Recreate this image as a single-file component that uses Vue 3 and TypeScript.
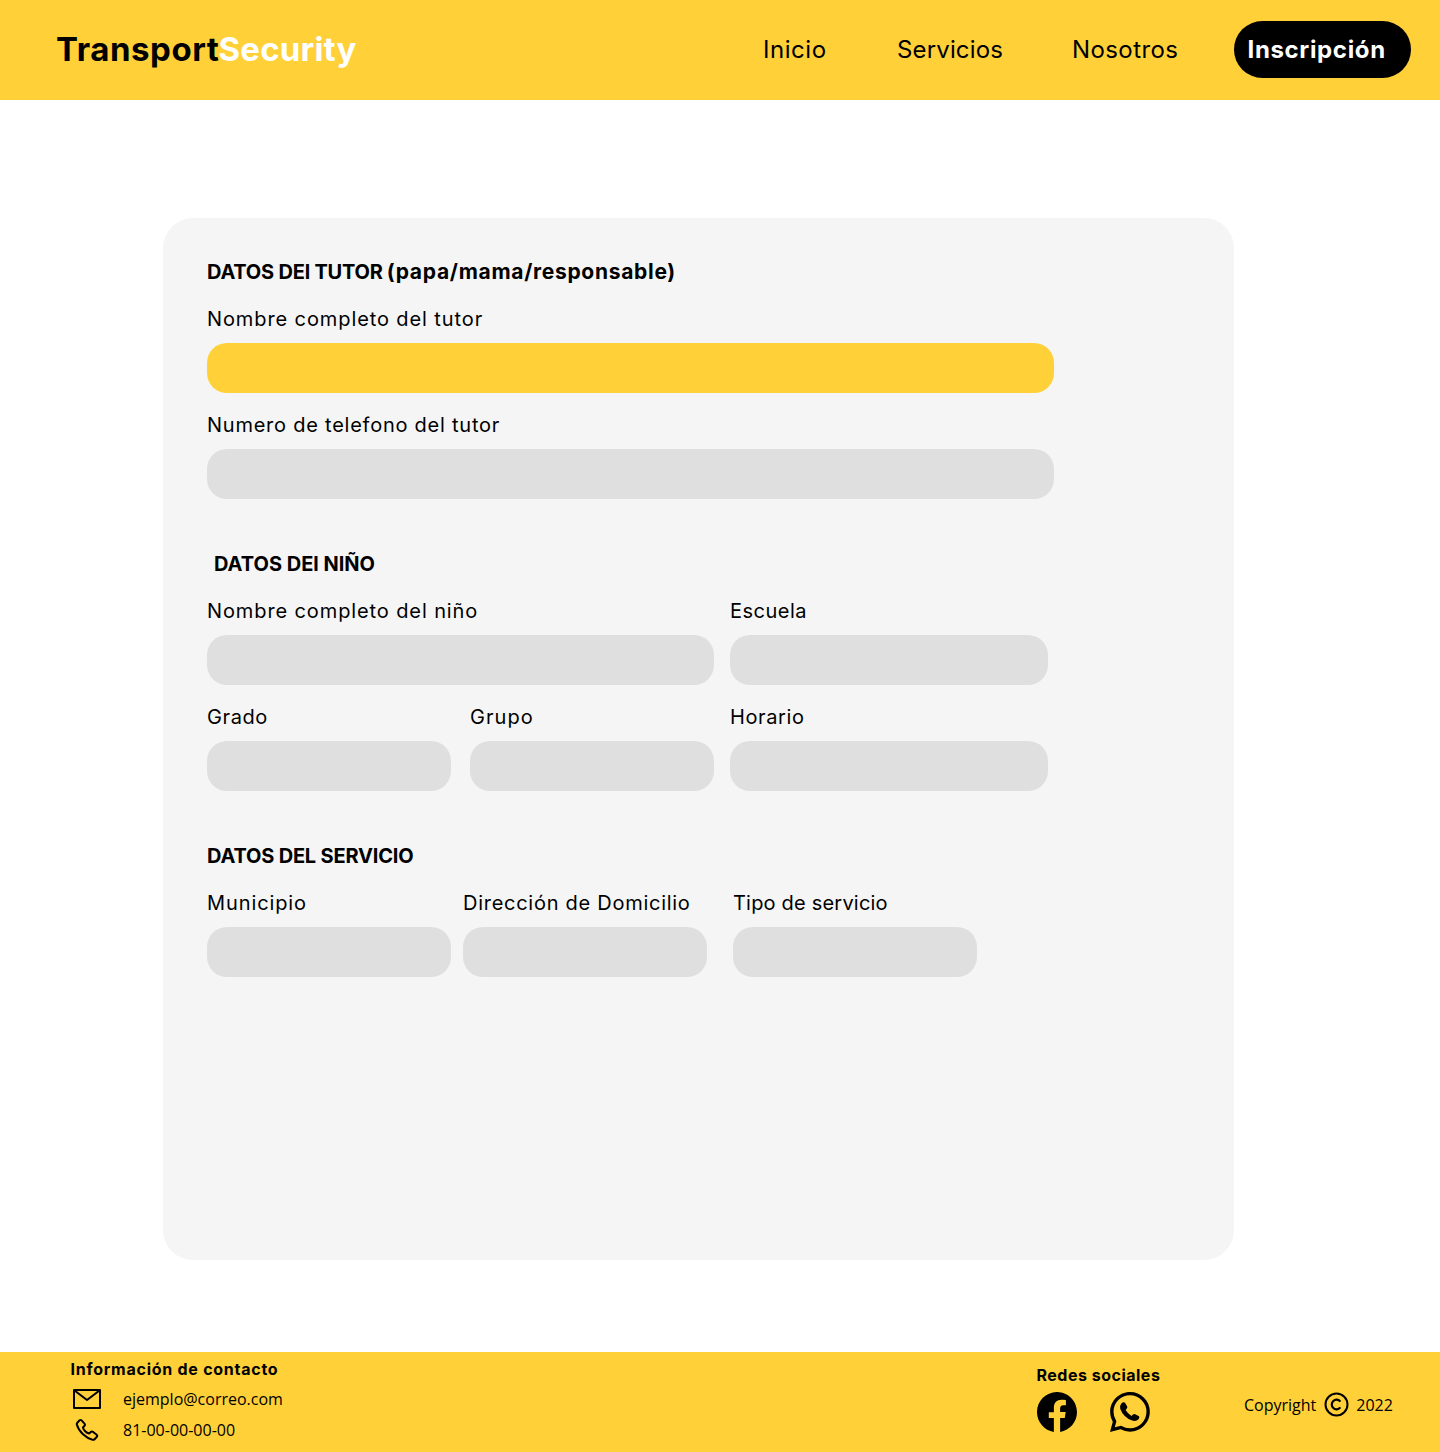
<script setup lang="ts">
interface Field {
  label: string
  width: number
  gap?: number
  spacing: number
  active?: boolean
}

interface Section {
  id: string
  title: string
  note?: string
  indent?: boolean
  rows: Field[][]
}

const links = [
  { label: 'Inicio', cls: 'home' },
  { label: 'Servicios', cls: 'services' },
  { label: 'Nosotros', cls: 'about' },
]

const sections: Section[] = [
  {
    id: 'tutor',
    title: 'DATOS DEl TUTOR',
    note: '(papa/mama/responsable)',
    rows: [
      [{ label: 'Nombre completo del tutor', width: 847, spacing: 0.9, active: true }],
      [{ label: 'Numero de telefono del tutor', width: 847, spacing: 0.76 }],
    ],
  },
  {
    id: 'nino',
    title: 'DATOS DEl NIÑO',
    indent: true,
    rows: [
      [
        { label: 'Nombre completo del niño', width: 507, spacing: 0.89 },
        { label: 'Escuela', width: 318, gap: 16, spacing: 0.5 },
      ],
      [
        { label: 'Grado', width: 244, spacing: 0.6 },
        { label: 'Grupo', width: 244, gap: 19, spacing: 1.05 },
        { label: 'Horario', width: 318, gap: 16, spacing: 0.6 },
      ],
    ],
  },
  {
    id: 'servicio',
    title: 'DATOS DEL SERVICIO',
    rows: [
      [
        { label: 'Municipio', width: 244, spacing: 0.9 },
        { label: 'Dirección de Domicilio', width: 244, gap: 12, spacing: 0.73 },
        { label: 'Tipo de servicio', width: 244, gap: 26, spacing: 0.2 },
      ],
    ],
  },
]
</script>

<template>
  <div class="page">
    <header class="header">
      <div class="logo"><span class="dark">Transport</span><span class="light">Security</span></div>
      <nav class="nav">
        <a v-for="l in links" :key="l.cls" :class="l.cls">{{ l.label }}</a>
        <a class="cta">Inscripción</a>
      </nav>
    </header>

    <main class="main">
      <form class="card">
        <section v-for="s in sections" :key="s.id" class="section">
          <h2 class="title" :class="[s.id, { indent: s.indent }]">
            <span>{{ s.title }}</span><span v-if="s.note" class="note">{{ s.note }}</span>
          </h2>
          <div v-for="(row, i) in s.rows" :key="i" class="row">
            <div
              v-for="f in row"
              :key="f.label"
              class="field"
              :style="{ width: f.width + 'px', marginLeft: (f.gap ?? 0) + 'px' }"
            >
              <span class="label" :style="{ letterSpacing: f.spacing + 'px' }">{{ f.label }}</span>
              <div class="input" :class="{ active: f.active }"></div>
            </div>
          </div>
        </section>
      </form>
    </main>

    <footer class="footer">
      <div class="contact">
        <h3>Información de contacto</h3>
        <div class="line mail">
          <svg width="28" height="20" viewBox="0 0 28 20" fill="none" stroke="#000" stroke-width="2" stroke-linejoin="round">
            <rect x="1" y="1" width="26" height="18" />
            <path d="M1.5 1.5 14 11 26.5 1.5" />
          </svg>
          <span>ejemplo@correo.com</span>
        </div>
        <div class="line phone">
          <svg width="28" height="24" viewBox="0 0 28 24" fill="none" stroke="#000" stroke-width="2" stroke-linejoin="round">
            <path d="M4.3 4.7 6.6 2.3Q7.6 1.5 8.6 2.4L11.7 5.9Q12.4 6.9 11.6 7.8L9.9 9.5Q10.5 11.6 12.2 13.2 14 15 16.1 15.5L17.8 13.9Q18.8 13 19.8 13.8L23.7 16.8Q24.8 17.8 23.9 18.8L21.6 21.2Q20.8 22 19.5 21.7 14.6 20.6 10 16.3 5.2 11.8 3.8 6.6 3.6 5.4 4.3 4.7Z" />
          </svg>
          <span>81-00-00-00-00</span>
        </div>
      </div>

      <div class="social">
        <h3>Redes sociales</h3>
        <div class="icons">
          <svg width="40" height="40" viewBox="0 0 16 16">
            <path d="M16 8.049c0-4.446-3.582-8.05-8-8.05C3.58 0-.002 3.603-.002 8.05c0 4.017 2.926 7.347 6.75 7.951v-5.625h-2.03V8.05H6.75V6.275c0-2.017 1.195-3.131 3.022-3.131.876 0 1.791.157 1.791.157v1.98h-1.009c-.993 0-1.303.621-1.303 1.258v1.51h2.218l-.354 2.326H9.25V16c3.824-.604 6.75-3.934 6.75-7.951z" />
          </svg>
          <svg width="40" height="40" viewBox="0 0 40 40">
            <path transform="scale(2.5)" d="M13.601 2.326A7.854 7.854 0 0 0 7.994 0C3.627 0 .068 3.558.064 7.926c0 1.399.366 2.76 1.057 3.965L0 16l4.204-1.102a7.933 7.933 0 0 0 3.79.965h.004c4.368 0 7.926-3.558 7.93-7.93A7.898 7.898 0 0 0 13.6 2.326zM7.994 14.521a6.573 6.573 0 0 1-3.356-.92l-.24-.144-2.494.654.666-2.433-.156-.251a6.56 6.56 0 0 1-1.007-3.505c0-3.626 2.957-6.584 6.591-6.584a6.56 6.56 0 0 1 4.66 1.931 6.557 6.557 0 0 1 1.928 4.66c-.004 3.639-2.961 6.592-6.592 6.592z" />
            <path d="M11.3 11.6Q13.6 9.2 15 10.8L17.2 14.4Q17.6 15.5 16.8 16.5L15.6 18.1Q17.7 21.7 21.4 23.9L23.1 22.4Q24.1 21.7 25.2 22.2L29 24.3Q30 25.2 28.5 27.3 26 29.8 22.2 28.6 13.4 25.2 10.3 16.9 9.4 13.9 11.3 11.6Z" />
          </svg>
        </div>
      </div>

      <div class="copy">
        <span>Copyright</span>
        <svg width="25" height="25" viewBox="0 0 25 25" fill="none" stroke="#000" stroke-width="2">
          <circle cx="12.5" cy="12.5" r="11" />
          <path stroke-width="2.2" d="M16.4 9.6A4.8 4.8 0 1 0 16.4 15.4" />
        </svg>
        <span>2022</span>
      </div>
    </footer>
  </div>
</template>

<style>
body {
  background: #fff;
}
</style>

<style scoped>
.page {
  display: flex;
  flex-direction: column;
  width: 1440px;
  height: 1452px;
  overflow: hidden;
  color: #000;
  font-family: "Inter", "Liberation Sans", sans-serif;
}
.header {
  box-sizing: border-box;
  display: flex;
  flex: none;
  align-items: center;
  justify-content: space-between;
  height: 100px;
  padding: 0 29px 1px 56px;
  background: #ffd037;
}
.logo {
  display: flex;
  margin-top: -1px;
  font-size: 33px;
  font-weight: 700;
  line-height: 40px;
  white-space: nowrap;
}
.dark {
  width: 162.5px;
  letter-spacing: 0.55px;
}
.light {
  color: #fff;
  letter-spacing: 0.2px;
}
.nav {
  display: flex;
  align-items: center;
  font-size: 24px;
  line-height: 58px;
}
.home {
  width: 134px;
  letter-spacing: 0.55px;
}
.services {
  width: 175px;
  letter-spacing: 0.15px;
}
.about {
  width: 162px;
  letter-spacing: 0.4px;
}
.cta {
  box-sizing: border-box;
  width: 177px;
  height: 57px;
  padding-left: 13.5px;
  border-radius: 29px;
  background: #000;
  color: #fff;
  font-weight: 700;
  letter-spacing: 0.65px;
}
.main {
  box-sizing: border-box;
  flex: none;
  height: 1252px;
  padding: 118px 0 0 163px;
}
.card {
  box-sizing: border-box;
  width: 1071px;
  height: 1042px;
  padding: 39px 44px;
  border-radius: 30px;
  background: #f5f5f5;
}
.section + .section {
  margin-top: 50px;
}
.title {
  display: flex;
  margin: 0 0 17px;
  font-size: 20px;
  font-weight: 700;
  line-height: 30px;
  white-space: nowrap;
}
.tutor {
  letter-spacing: -0.2px;
}
.servicio {
  letter-spacing: -0.18px;
}
.title.indent {
  margin-left: 7px;
}
.note {
  margin-left: 4px;
  font-size: 21px;
  letter-spacing: 0.7px;
}
.row {
  display: flex;
}
.row + .row {
  margin-top: 17px;
}
.label {
  display: block;
  margin-bottom: 9px;
  font-size: 20px;
  font-weight: 400;
  line-height: 30px;
  white-space: nowrap;
}
.input {
  height: 50px;
  border-radius: 20px;
  background: #dfdfdf;
}
.input.active {
  background: #ffd037;
}
.footer {
  display: flex;
  flex: none;
  height: 100px;
  background: #ffd037;
  font-family: "Open Sans", "Noto Sans", sans-serif;
  font-size: 16px;
}
h3 {
  margin: 0;
  font-family: "Inter", sans-serif;
  font-size: 16px;
  font-weight: 700;
  line-height: 20px;
  white-space: nowrap;
}
svg {
  display: block;
  flex: none;
}
.contact {
  box-sizing: border-box;
  width: 1036px;
  padding: 7px 0 0 70px;
}
.contact h3 {
  margin-left: 0.5px;
  letter-spacing: 0.74px;
}
.line {
  display: flex;
  align-items: center;
  gap: 22px;
  padding-left: 3px;
  line-height: 22px;
}
.mail {
  margin-top: 9px;
}
.phone {
  margin-top: 8px;
}
.social {
  width: 208px;
  padding-top: 13px;
}
.social h3 {
  margin-left: 0.5px;
  letter-spacing: 0.5px;
}
.icons {
  display: flex;
  gap: 33px;
  margin: 7px 0 0 1px;
}
.copy {
  display: flex;
  align-items: center;
  height: 105px;
}
.copy svg {
  margin: 0 7px 0 8px;
}
</style>
